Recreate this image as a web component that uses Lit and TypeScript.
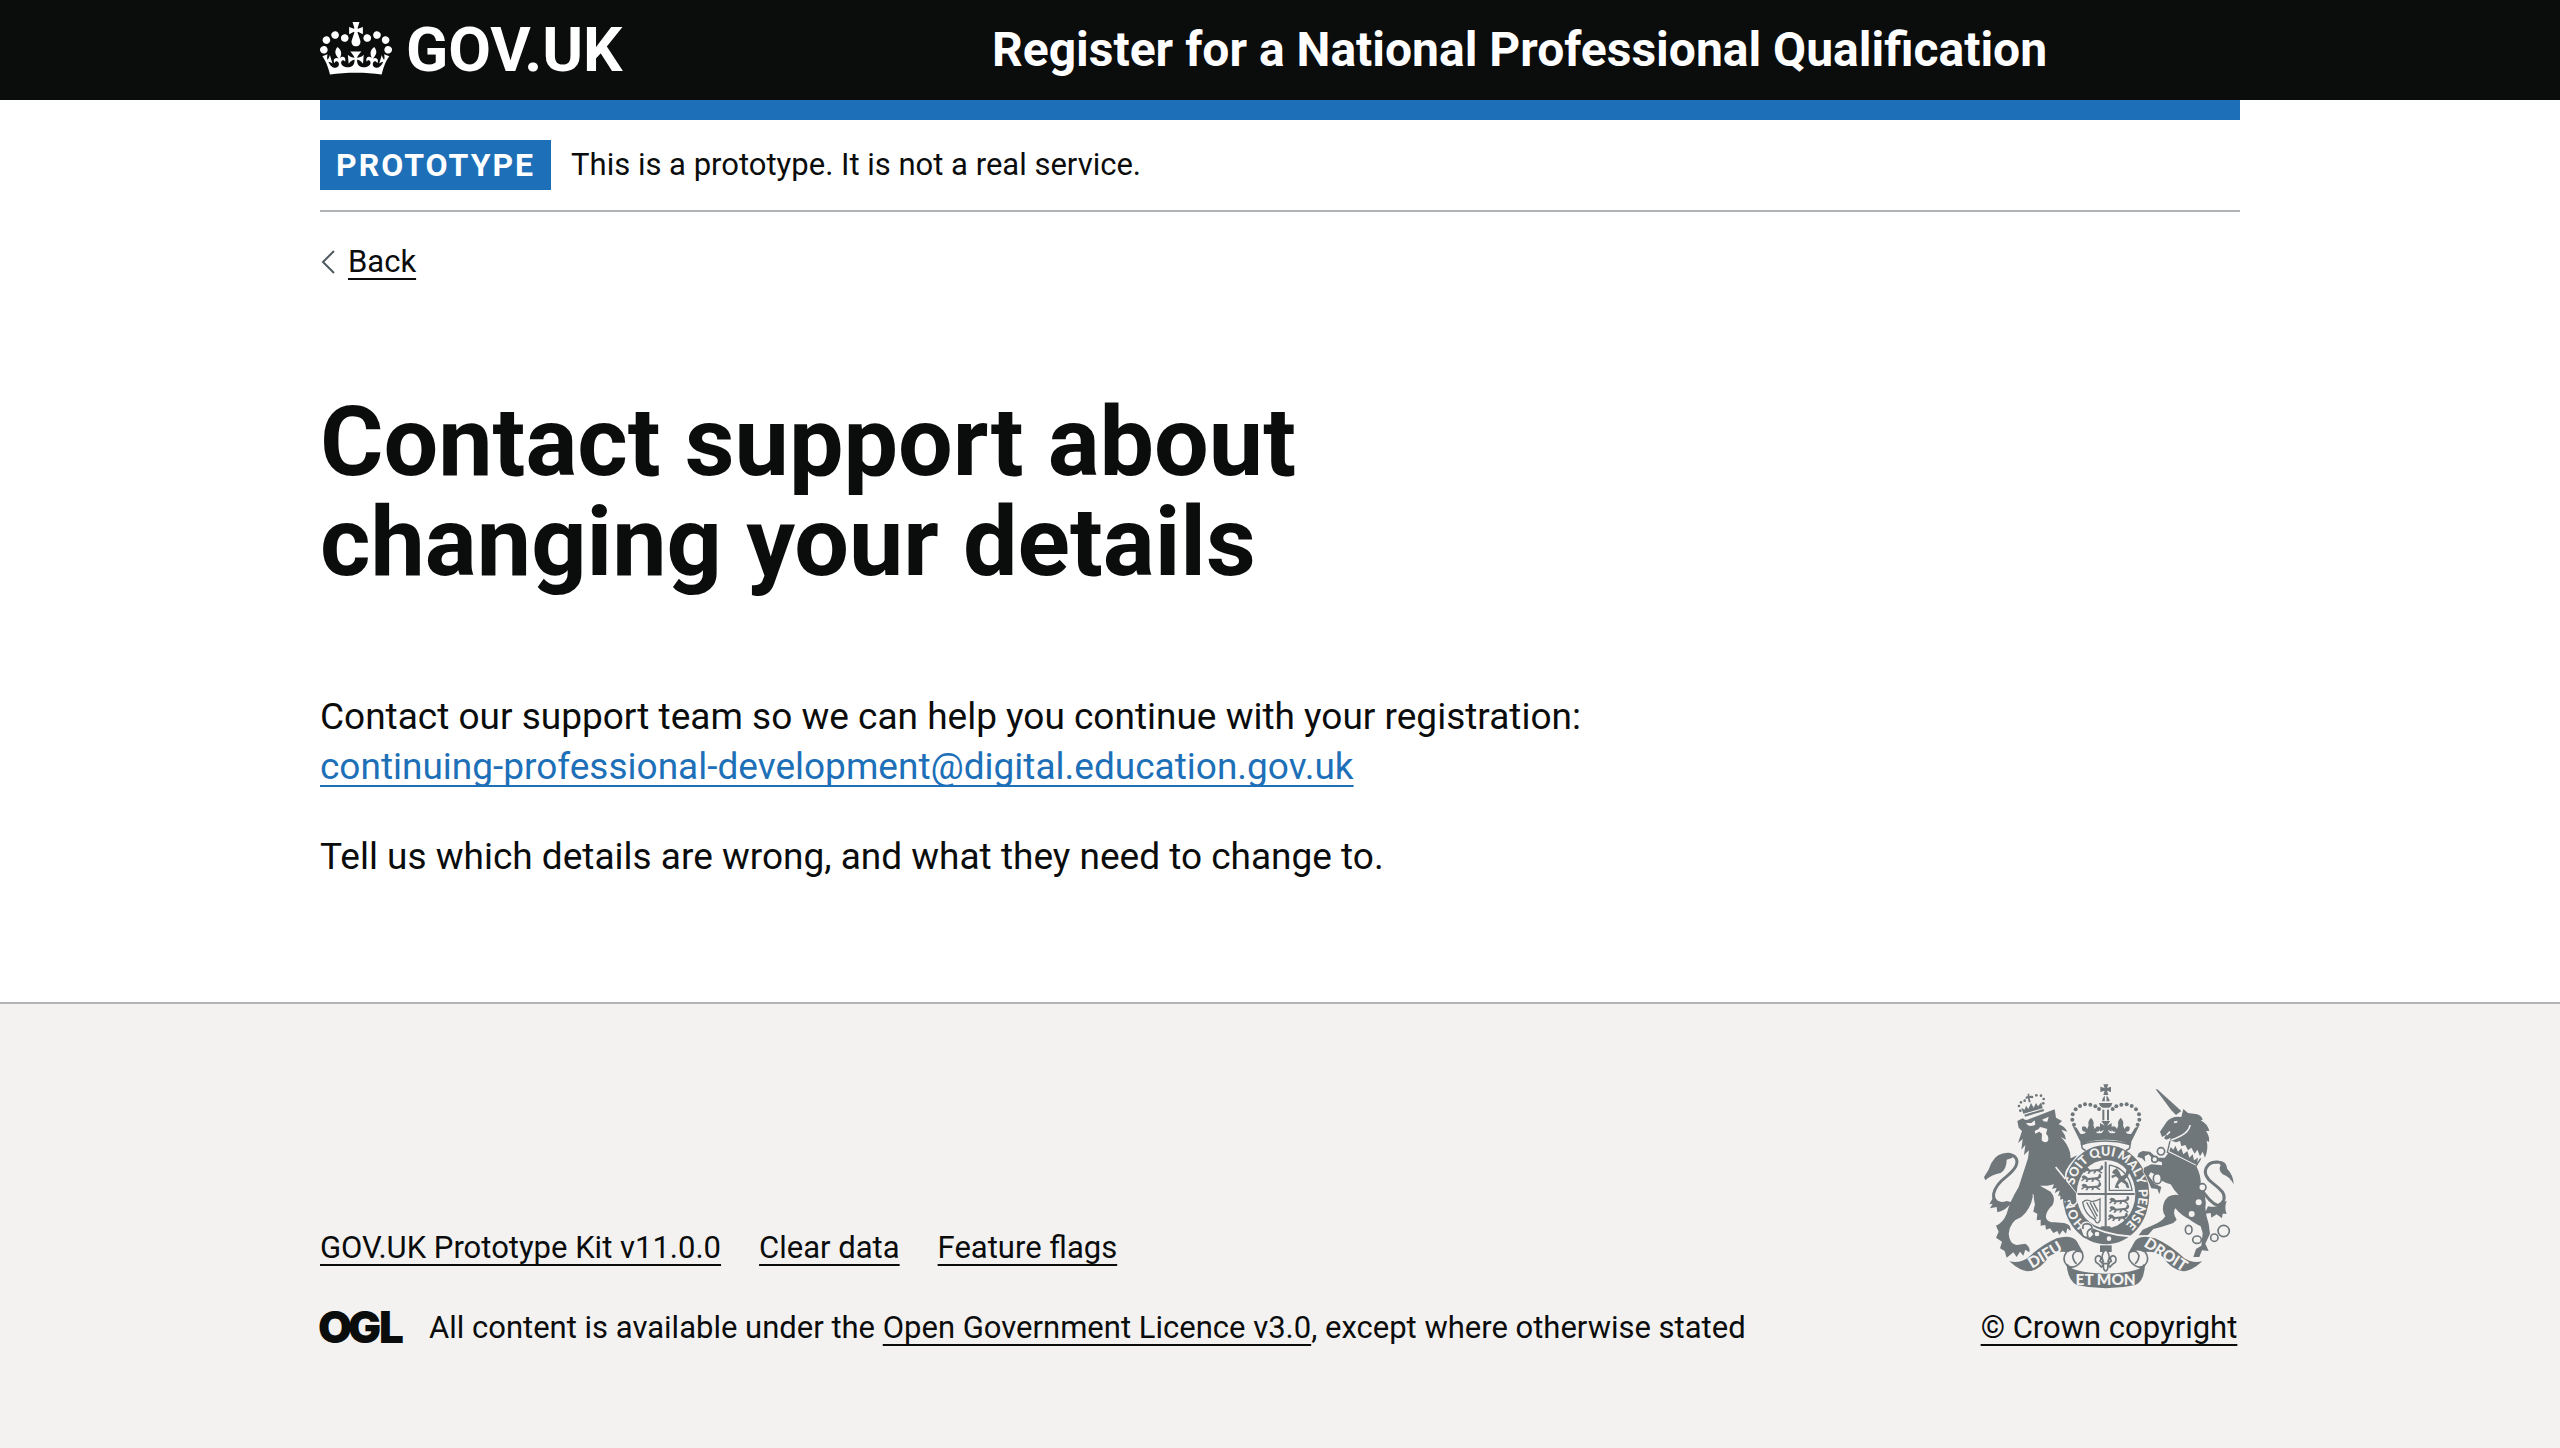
import { LitElement, html, css, svg } from "lit";
import { customElement } from "lit/decorators.js";

const mirror = "translate(875 0) scale(-1 1)";

/* Dots along the arches of the central crown, left half. */
const archDots = [
  [342, 163], [337, 148], [338, 132], [347, 117], [360, 107], [375, 102], [391, 103], [406, 108], [417, 116],
];

const lionDots = [
  [181, 121], [177, 107], [183, 96], [194, 91], [216, 80], [229, 75], [243, 76], [251, 86], [250, 99],
];

/* One walking lion of a quartering, drawn around its own origin. */
const walkingLion = svg`
  <path d="M-30 -4L-24 -9L-16 -7L-10 -1L14 -3Q22 -3 22 -9Q20 -14 26 -14Q32 -10 28 -2L20 3L28 8L24 11L14 4L8 4L6 10L0 11L2 4L-8 5L-12 11L-18 11L-14 4L-20 3L-28 9L-31 6L-25 1Z"></path>
`;

const arms = svg`
  <g class="ink">
    <path d="M172 152L188 144Q196 152 206 147L284 117L288 142L306 152L296 162Q314 168 322 184L304 178Q316 192 318 208L302 200Q322 218 330 246L332 264L352 255L326 286Q312 306 322 330L346 364L348 390Q342 404 334 398L328 382L318 402L314 382L300 388L308 372L294 378L300 360L284 368L290 352L276 356L282 342L262 346L240 346L272 364Q288 382 278 404Q256 424 258 442Q262 456 284 456L312 458Q334 462 332 482L322 474L318 490L308 480L298 494L292 482L280 488L270 474L258 478L256 464L242 466L242 448L230 450L232 430L220 424L224 404L219 378Q210 420 184 440Q150 452 146 490Q148 520 170 524L196 520Q212 530 208 546L196 538L190 556L180 544L170 560L160 546L140 562L134 542L120 534L126 514L108 502L116 484L108 466Q130 456 140 430Q150 392 176 350L204 264L207 240L192 254L196 224L184 238L188 206L174 218L186 182L176 172Z"></path>
    <path d="M152 248Q112 244 94 278Q88 298 72 320L76 330Q96 312 122 308Q140 296 140 268L158 262Z"></path>
    <path d="M102 376L88 402L98 400L90 414L110 410L112 426Q140 420 154 396L140 392Q112 402 102 376Z"></path>
    <path d="M193 133L250 116L253 122L195 139Z"></path>
    <path d="M190 130L184 112L194 118L198 106L205 116L213 98L221 112L228 98L234 108L244 96L248 114Z"></path>
    <path d="M203 70L208 70L208 77L215 76L215 83L209 83L212 96L206 96L204 84L197 86L197 79L203 78Z"></path>
    ${lionDots.map(([x, y]) => svg`<circle cx=${x} cy=${y} r="4"></circle>`)}
  </g>
  <path class="line wide" d="M158 398Q96 410 101 370Q106 344 140 318Q180 286 168 264Q160 250 136 253"></path>
  <g class="paper">
    <path d="M198 158L214 158L224 150L226 163Q212 170 204 165Z"></path>
    <path d="M246 148L266 139L262 154Q252 156 246 148Z"></path>
    <path d="M224 182L236 176L240 170L250 172L262 176L258 190Q268 198 264 212Q254 220 245 210L246 190L238 184L226 190Z"></path>
  </g>
  <path class="cut slim" d="M219 372L223 406"></path>

  <g class="ink">
    <path d="M430 42H445L441 53L453 49V65L441 61L445 74H430L434 61L421 65V49L434 53Z"></path>
    <path d="M426 93Q428 78 437 76Q447 78 449 93Z"></path>
    <path d="M417 98H457Q456 108 447 112H428Q418 108 417 98Z"></path>
    <rect x="427" y="118" width="6" height="32"></rect>
    <rect x="441" y="118" width="6" height="32"></rect>
  </g>
  <path class="gap" d="M437 76V94"></path>
  ${[undefined, mirror].map(
    (side) => svg`
      <g class="ink" transform=${side ?? "translate(0 0)"}>
        ${archDots.map(([x, y]) => svg`<circle cx=${x} cy=${y} r="6"></circle>`)}
        <path d="M338 168L350 172L361 190Q374 194 378 184Q364 186 366 170Q376 164 382 176L386 164Q382 154 393 142Q404 154 400 164L404 176Q410 164 420 170Q422 186 408 184Q412 194 424 190L432 178L420 184V158L434 166L424 152H438V196Q398 196 360 212Z"></path>
        <path d="M359 194Q396 188 438 188V208Q396 208 372 220L362 224Z"></path>
      </g>
    `,
  )}
  <path class="line" d="M377 240Q362 236 366 222Q400 212 437 212Q474 212 509 222Q514 236 498 240"></path>

  <ellipse class="ink" cx="438" cy="373" rx="130" ry="149"></ellipse>
  <ellipse class="paper" cx="438" cy="371" rx="88" ry="102"></ellipse>
  <g class="motto round">
    <path id="garter" class="track" d="M438 486A98 115 0 0 1 438 256A98 115 0 0 1 438 486"></path>
    <text><textPath href="#garter" startOffset="110">HON</textPath></text>
    <text><textPath href="#garter" startOffset="237">SOIT</textPath></text>
    <text><textPath href="#garter" startOffset="324">QUI</textPath></text>
    <text><textPath href="#garter" startOffset="408">MAL</textPath></text>
    <text><textPath href="#garter" startOffset="462">Y</textPath></text>
    <text><textPath href="#garter" startOffset="546">PENSE</textPath></text>
  </g>
  <g class="ink">
    <rect x="434" y="274" width="6" height="196"></rect>
    <rect x="352" y="368" width="172" height="6"></rect>
    <g transform="translate(400 299)">${walkingLion}</g>
    <g transform="translate(394 324)">${walkingLion}</g>
    <g transform="translate(394 349)">${walkingLion}</g>
    <g transform="translate(478 391)">${walkingLion}</g>
    <g transform="translate(478 416)">${walkingLion}</g>
    <g transform="translate(474 441)">${walkingLion}</g>
    <path d="M460 300L470 294L478 304L484 318L496 312L500 296L494 290L504 284L510 300L504 318L494 328L504 338L508 354L500 352L496 342L484 334L474 344L478 354L464 352L468 340L476 326L468 318L456 324L454 316L466 312L456 308Z"></path>
    <path d="M424 468H450L458 480H416Z"></path>
  </g>
  <path class="line fine" d="M448 284V360H518M448 284Q504 294 516 358M368 396Q380 384 394 394Q410 392 420 386V450Q412 466 404 448Q374 432 368 396ZM380 396L408 446M390 396L412 438M400 396L414 424"></path>
  <path class="gap" d="M376 458Q430 494 512 498"></path>
  <path class="paper" d="M362 470Q364 452 384 454Q402 462 400 474L392 482L400 492Q388 508 372 500Z"></path>
  <path class="line" d="M370 476Q364 460 382 460Q396 462 396 474Q376 480 384 500Q370 504 364 490"></path>
  <circle class="paper" cx="411" cy="491" r="7"></circle>
  <circle class="paper" cx="447" cy="505" r="7"></circle>

  <path class="gap" d="M324 294Q310 316 324 338L350 372L352 394Q344 410 330 402"></path>
  <path class="ink" d="M290 284L318 276L318 292Q308 312 320 334L348 368L347 390Q341 404 334 398L328 382L318 402L314 382L302 388Z"></path>
  <path class="cut" d="M287 290L316 326"></path>

  <g class="edged">
    <path d="M626 247L710 290Q724 316 722 345Q742 384 736 412Q738 440 746 460L750 490L736 520L746 542L726 540L718 560L700 560L708 536L724 526L728 488L722 468Q700 456 690 448Q664 436 646 414Q636 426 650 448L640 458Q606 470 580 476L564 494L536 495L548 478L580 464Q606 454 616 438Q602 418 614 392Q626 370 656 374Q640 358 632 342Q604 336 584 312L572 306L566 316L584 340L604 350L598 372L592 356L574 354L558 316L550 304L552 292L574 282L606 285V276L580 268L566 252L554 258L556 274L546 264L532 260L536 248L548 242L570 244L590 262L614 262Z"></path>
  </g>
  <g class="ink">
    <path d="M587 57L592 57L664 122L648 134L634 120Z"></path>
    <path d="M600 184L620 154Q636 136 664 140L670 116L684 128L712 132Q726 138 728 148L722 150Q742 160 748 182L738 182Q750 200 747 215L740 211Q746 236 735 262L728 244L720 258L712 238L704 250L694 232L684 240L676 224L664 228L660 212L648 216L630 210L632 202L620 208L612 204L618 194L606 200Z"></path>
    <path d="M632 230L640 238L646 226L654 244L664 234L670 252L682 242L688 262L698 252L702 270L714 262L712 276L722 268L710 284L628 243Z"></path>
    <path d="M766 272Q800 268 802 296Q820 314 821 342Q808 318 788 312Q774 300 782 284Z"></path>
    <path d="M744 408L734 430L752 428L754 442L770 432L786 444L788 430L800 430Q792 414 800 392L786 396Q778 414 744 408Z"></path>
  </g>
  <path class="line wide" d="M722 352Q748 396 774 406Q802 392 788 366Q776 352 760 340Q728 316 738 294Q748 272 776 276"></path>
  <path class="cut" d="M642 156L652 154M690 164Q688 190 634 209M620 194L630 184"></path>
  <path class="line fine" d="M630 212L622 246L708 288L722 264"></path>
  <g class="bezant">
    <circle cx="603" cy="243" r="11"></circle>
    <circle cx="584" cy="267" r="9"></circle>
    <ellipse cx="592" cy="325" rx="12" ry="15"></ellipse>
    <circle cx="727" cy="351" r="11"></circle>
    <ellipse cx="686" cy="478" rx="10" ry="13"></ellipse>
    <ellipse cx="711" cy="508" rx="13" ry="11"></ellipse>
    <circle cx="763" cy="502" r="11"></circle>
    <circle cx="791" cy="482" r="17"></circle>
  </g>
  <circle class="paper" cx="716" cy="396" r="9"></circle>
  <circle class="paper" cx="695" cy="431" r="9"></circle>

  ${[undefined, mirror].map(
    (side) => svg`
      <g transform=${side ?? "translate(0 0)"}>
        <path class="edged" d="M148 573Q178 580 202 564Q244 524 290 504Q332 492 350 512L370 548Q340 534 324 546Q292 540 266 560Q240 600 204 603Q180 602 148 573Z"></path>
        <path class="line" d="M320 544Q304 566 320 584Q334 596 350 586Q376 568 366 546Q344 536 338 556Q340 574 350 580M322 582L334 606"></path>
      </g>
    `,
  )}
  <path class="ink" d="M320 584Q346 608 437 610Q530 608 555 584Q552 634 526 644Q437 664 350 644Q324 630 320 584Z"></path>
  <g class="motto">
    <text transform="translate(263 567) rotate(-31)">DIEU</text>
    <text transform="translate(609 565) rotate(33)">DROIT</text>
    <text transform="translate(437 645)">ET MON</text>
  </g>
  <rect class="ink" x="420" y="525" width="35" height="20"></rect>
  <path class="leaf" d="M437 536Q420 556 430 574Q424 578 420 572Q428 558 414 556Q402 560 408 576Q416 580 424 590L430 584Q430 600 437 602Q444 600 444 584L450 590Q458 580 466 576Q472 560 460 556Q446 558 454 572Q450 578 444 574Q454 556 437 536ZM424 580H450"></path>
`;

@customElement("crown-mark")
export class CrownMark extends LitElement {
  static styles = css`
    :host { display: block; }
    .mark { display: block; width: 72px; height: 53px; fill: currentColor; }
  `;

  render() {
    return html`<svg class="mark" viewBox="0 0 132 97" aria-hidden="true"><path fill-rule="evenodd" d="M25 30.2c3.5 1.5 7.7-.2 9.1-3.7 1.5-3.6-.2-7.8-3.9-9.2-3.6-1.4-7.6.3-9.1 3.9-1.4 3.5.3 7.5 3.9 9zM9 39.5c3.6 1.5 7.8-.2 9.2-3.7 1.5-3.6-.2-7.8-3.9-9.1-3.6-1.5-7.6.2-9.1 3.8-1.4 3.5.3 7.5 3.8 9zM4.4 57.2c3.5 1.5 7.7-.2 9.1-3.8 1.5-3.6-.2-7.7-3.9-9.1-3.5-1.5-7.6.3-9.1 3.8-1.4 3.5.3 7.6 3.9 9.1zm38.3-21.4c3.5 1.5 7.7-.2 9.1-3.8 1.5-3.6-.2-7.7-3.9-9.1-3.6-1.5-7.6.3-9.1 3.8-1.3 3.6.4 7.7 3.9 9.1zm64.4-5.6c-3.6 1.5-7.8-.2-9.1-3.7-1.5-3.6.2-7.8 3.8-9.2 3.6-1.4 7.7.3 9.2 3.9 1.3 3.5-.4 7.5-3.9 9zm15.9 9.3c-3.6 1.5-7.7-.2-9.1-3.7-1.5-3.6.2-7.8 3.7-9.1 3.6-1.5 7.7.2 9.2 3.8 1.5 3.5-.3 7.5-3.8 9zm4.7 17.7c-3.6 1.5-7.8-.2-9.2-3.8-1.5-3.6.2-7.7 3.9-9.1 3.6-1.5 7.7.3 9.2 3.8 1.3 3.5-.4 7.6-3.9 9.1zM89.3 35.8c-3.6 1.5-7.8-.2-9.2-3.8-1.4-3.6.2-7.7 3.9-9.1 3.6-1.5 7.7.3 9.2 3.8 1.4 3.6-.3 7.7-3.9 9.1zM69.7 17.7l8.9 4.7V9.3l-8.9 2.8c-.2-.3-.5-.6-.9-.9L72.4 0H59.6l3.5 11.2c-.3.3-.6.5-.9.9l-8.8-2.8v13.1l8.8-4.7c.3.3.6.7.9.9l-5 15.4v.1c-.2.8-.4 1.6-.4 2.4 0 4.1 3.1 7.5 7 8.1h.2c.3 0 .7.1 1 .1.4 0 .7 0 1-.1h.2c4-.6 7.1-4.1 7.1-8.1 0-.8-.1-1.7-.4-2.4V34l-5.1-15.4c.4-.2.7-.6 1-.9zM66 92.8c16.9 0 32.8 1.1 47.1 3.2 4-16.9 8.9-26.7 14-33.5l-9.6-3.4c1 4.9 1.1 7.2 0 10.2-1.5-1.4-3-4.3-4.2-8.7L108.6 76c2.8-2 5-3.2 7.5-3.3-4.4 9.4-10 11.9-13.6 11.2-4.3-.8-6.3-4.6-5.6-7.9 1-4.7 5.7-5.9 8-.5 4.3-8.7-3-11.4-7.6-8.8 7.1-7.2 7.9-13.5 2.1-21.1-8 6.1-8.1 12.3-4.5 20.8-4.7-5.4-12.1-2.5-9.5 6.2 3.4-5.2 7.9-2 7.2 3.1-.6 4.3-6.4 7.8-13.5 7.2-10.3-.9-10.9-8-11.2-13.8 2.5-.5 7.1 1.8 11 7.3L80.2 60c-4.1 4.4-8 5.3-12.3 5.4 1.4-4.4 8-11.6 8-11.6H55.5s6.4 7.2 7.9 11.6c-4.2-.1-8-1-12.3-5.4l1.4 16.4c3.9-5.5 8.5-7.7 10.9-7.3-.3 5.8-.9 12.8-11.1 13.8-7.2.6-12.9-2.9-13.5-7.2-.7-5 3.8-8.3 7.1-3.1 2.7-8.7-4.6-11.6-9.4-6.2 3.7-8.5 3.6-14.7-4.6-20.8-5.8 7.6-5 13.9 2.2 21.1-4.7-2.6-11.9.1-7.7 8.8 2.3-5.5 7.1-4.2 8.1.5.7 3.3-1.3 7.1-5.7 7.9-3.5.7-9-1.8-13.5-11.2 2.5.1 4.7 1.3 7.5 3.3l-4.7-15.4c-1.2 4.4-2.7 7.2-4.3 8.7-1.1-3-.9-5.3 0-10.2l-9.5 3.4c5 6.9 9.9 16.7 14 33.5 14.8-2.1 30.8-3.2 47.7-3.2z"></path></svg>`;
  }
}

@customElement("royal-arms")
export class RoyalArms extends LitElement {
  static styles = css`
    :host { display: block; }
    .arms { display: block; width: 250px; height: 204px; overflow: visible; }
    .ink { fill: #6f777b; }
    .paper { fill: #f3f2f1; }
    .edged { fill: #6f777b; stroke: #f3f2f1; stroke-width: 4; paint-order: stroke; }
    .line { fill: none; stroke: #6f777b; stroke-width: 5; }
    .wide { stroke-width: 9; }
    .fine { stroke-width: 4; }
    .cut, .gap { fill: none; stroke: #f3f2f1; stroke-width: 5; }
    .slim { stroke-width: 3; }
    .track { fill: none; }
    .leaf, .bezant { fill: #f3f2f1; stroke: #6f777b; stroke-width: 5; }
    .motto { fill: #f3f2f1; font-family: Lato, "Liberation Sans", sans-serif; font-weight: 900; font-size: 46px; text-anchor: middle; }
    .round { font-size: 38px; }
  `;

  render() {
    return html`<svg class="arms" viewBox="72 41 750 612" aria-hidden="true">${arms}</svg>`;
  }
}

@customElement("app-root")
export class AppRoot extends LitElement {
  static styles = css`
    :host {
      display: flex;
      flex-direction: column;
      min-height: 100vh;
      background: #ffffff;
      color: #0b0c0c;
      font-family: Roboto, "Liberation Sans", sans-serif;
      font-size: 31px;
      line-height: 40px;
    }
    .container { box-sizing: border-box; width: 75%; margin: 0 auto; }
    a { color: inherit; text-decoration-line: underline; text-decoration-thickness: 2px; text-underline-offset: 6px; text-decoration-skip-ink: none; }
    .header { background: #0b0c0c; color: #ffffff; font-weight: 700; }
    .header-row { display: grid; grid-template-columns: 35% 1fr; align-items: center; height: 100px; }
    .header a { text-decoration-line: none; }
    .home { display: flex; align-items: center; gap: 14px; font-size: 62px; line-height: 72px; }
    .home crown-mark { margin-bottom: 4px; }
    .service { font-size: 48px; line-height: 56px; }
    .bar { height: 20px; background: #1d70b8; }
    .phase { display: flex; align-items: center; gap: 20px; padding: 20px 0; border-bottom: 2px solid #b1b4b6; }
    .tag { padding: 5px 16px; background: #1d70b8; color: #ffffff; font-size: 32px; font-weight: 700; letter-spacing: 2px; text-transform: uppercase; }
    .back { display: inline-flex; align-items: center; gap: 12px; margin-top: 30px; text-decoration-line: none; }
    .back-label { text-decoration: underline 2px; text-underline-offset: 6px; }
    .chevron { width: 16px; height: 24px; fill: none; stroke: #505a5f; stroke-width: 2; }
    .main { padding: 108px 0 120px; }
    .column { max-width: 1280px; }
    .title { margin: 0 0 100px; font-size: 97px; line-height: 100px; font-weight: 700; }
    .body { margin: 0 0 40px; font-size: 37px; line-height: 50px; }
    .body:last-child { margin-bottom: 0; }
    .mail { color: #1d70b8; }
    .footer { flex: 1; border-top: 2px solid #b1b4b6; background: #f3f2f1; }
    .footer-row { display: flex; align-items: flex-end; justify-content: space-between; padding: 80px 0 100px; }
    .links { display: flex; gap: 38px; margin: 0 0 40px; padding: 0; list-style: none; }
    .licence { display: flex; align-items: center; gap: 27px; }
    .ogl { display: block; width: 82px; height: 34px; fill: currentColor; font-family: Inter, "Liberation Sans", sans-serif; font-size: 44px; font-weight: 900; overflow: visible; }
    .copyright { display: flex; flex-direction: column; align-items: center; gap: 20px; min-width: 262px; }
  `;

  render() {
    return html`
      <header class="header">
        <div class="container header-row">
          <a class="home" href="#home"><crown-mark></crown-mark><span>GOV.UK</span></a>
          <a class="service" href="#service">Register for a National Professional Qualification</a>
        </div>
      </header>
      <div class="container">
        <div class="bar"></div>
        <div class="phase">
          <strong class="tag">Prototype</strong>
          <span>This is a prototype. It is not a real service.</span>
        </div>
        <a class="back" href="#back">
          <svg class="chevron" viewBox="0 0 16 24" aria-hidden="true"><path d="M14 1L3 12L14 23"></path></svg>
          <span class="back-label">Back</span>
        </a>
        <main class="main">
          <div class="column">
            <h1 class="title">Contact support about changing your details</h1>
            <p class="body">
              Contact our support team so we can help you continue with your registration:<br />
              <a class="mail" href="mailto:continuing-professional-development@digital.education.gov.uk">continuing-professional-development@digital.education.gov.uk</a>
            </p>
            <p class="body">Tell us which details are wrong, and what they need to change to.</p>
          </div>
        </main>
      </div>
      <footer class="footer">
        <div class="container footer-row">
          <div>
            <ul class="links">
              <li><a href="#kit">GOV.UK Prototype Kit v11.0.0</a></li>
              <li><a href="#clear">Clear data</a></li>
              <li><a href="#flags">Feature flags</a></li>
            </ul>
            <div class="licence">
              <svg class="ogl" viewBox="0 0 82 34" role="img" aria-label="OGL"><text x="-2 28 59" y="32">OGL</text></svg>
              <span>All content is available under the <a href="#licence">Open Government Licence v3.0</a>, except where otherwise stated</span>
            </div>
          </div>
          <div class="copyright">
            <royal-arms></royal-arms>
            <a href="#copyright">© Crown copyright</a>
          </div>
        </div>
      </footer>
    `;
  }
}
